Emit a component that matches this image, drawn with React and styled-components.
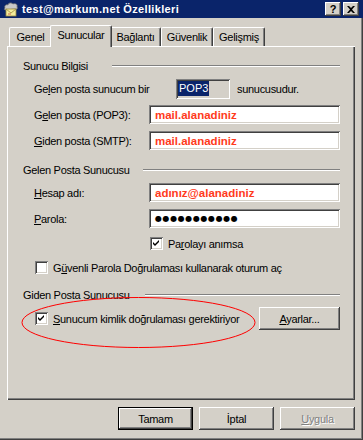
import React from 'react';
import styled, { createGlobalStyle, css } from 'styled-components';

const Global = createGlobalStyle`
  html, body { margin: 0; padding: 0; background: #d4d0c8; }
  body { font-family: "Liberation Sans", Arial, sans-serif; font-size: 11px; letter-spacing: -0.3px; color: #000; }
  * { box-sizing: border-box; }
`;

const raised = css`
  box-shadow: inset -1px -1px #404040, inset 1px 1px #fff, inset -2px -2px #808080, inset 2px 2px #d4d0c8;
`;
const sunken = css`
  box-shadow: inset 1px 1px #808080, inset -1px -1px #fff, inset 2px 2px #404040, inset -2px -2px #d4d0c8;
`;

const Window = styled.div`
  position: relative;
  width: 363px;
  height: 440px;
  background: #d4d0c8;
  display: flex;
  flex-direction: column;
  box-shadow: inset -1px -1px #404040, inset -2px -2px #808080;
  overflow: hidden;
`;

const TitleBar = styled.div`
  height: 18px;
  background: #0a246a;
  display: flex;
  align-items: center;
  padding: 0 4px 0 3px;
  color: #fff;
`;

const TitleText = styled.span`
  font-weight: bold;
  font-size: 11px;
  letter-spacing: 0.35px;
  margin-left: 3px;
  flex: 1;
`;

const TitleButton = styled.div`
  width: 16px;
  height: 14px;
  background: #d4d0c8;
  ${raised};
  color: #000;
  display: flex;
  align-items: center;
  justify-content: center;
  font-weight: bold;
  font-size: 11px;
  margin-left: ${(p) => p.$ml || 0}px;
  line-height: 1;
`;

const Body = styled.div`
  padding: 7px 8px 0 7px;
  display: flex;
  flex-direction: column;
`;

const TabRow = styled.div`
  height: 21px;
  display: flex;
  align-items: flex-end;
  padding-left: 2px;
  position: relative;
  z-index: 1;
`;

const Tab = styled.div`
  width: ${(p) => p.$w}px;
  height: ${(p) => (p.$active ? 22 : 19)}px;
  margin: ${(p) => (p.$active ? '0 -2px 0 -2px' : '0')};
  margin-bottom: ${(p) => (p.$active ? '-1px' : '0')};
  background: #d4d0c8;
  border-top: 1px solid #fff;
  border-left: 1px solid #fff;
  border-right: 1px solid #404040;
  border-radius: 2px 2px 0 0;
  box-shadow: inset -1px 0 #808080;
  display: flex;
  align-items: ${(p) => (p.$active ? 'flex-start' : 'center')};
  padding-top: ${(p) => (p.$active ? 3 : 0)}px;
  justify-content: center;
  position: relative;
  z-index: ${(p) => (p.$active ? 2 : 1)};
`;

const Panel = styled.div`
  width: 348px;
  height: 354px;
  box-shadow: inset 1px 1px #fff, inset -1px -1px #404040, inset -2px -2px #808080;
  padding: 13px 15px 0 16px;
  display: flex;
  flex-direction: column;
`;

const Section = styled.div`
  display: flex;
  flex-direction: column;
  gap: ${(p) => p.$gap ?? 7}px;
  margin-top: ${(p) => p.$mt || 0}px;
`;

const Header = styled.div`
  height: 13px;
  display: flex;
  align-items: center;
`;

const HeaderLabel = styled.span`
  width: ${(p) => p.$w}px;
  white-space: nowrap;
`;

const Etch = styled.div`
  flex: 1;
  height: 2px;
  border-top: 1px solid #808080;
  border-bottom: 1px solid #fff;
`;

const Row = styled.div`
  display: flex;
  align-items: center;
  height: ${(p) => p.$h || 19}px;
  padding-left: ${(p) => p.$pl ?? 11}px;
  margin-top: ${(p) => p.$mt || 0}px;
`;

const Label = styled.span`
  width: ${(p) => p.$w || 115}px;
  flex-shrink: 0;
  white-space: nowrap;
`;

const U = styled.span`
  text-decoration: underline;
`;

const Input = styled.div`
  flex: 1;
  height: 19px;
  background: #fff;
  ${sunken};
  display: flex;
  align-items: center;
  padding-left: 6px;
  color: #ff3a1c;
  font-weight: bold;
  font-size: 11.5px;
  letter-spacing: 0;
`;

const Dots = styled.span`
  color: #000;
  font-family: "DejaVu Sans", sans-serif;
  font-size: 8px;
  letter-spacing: 0.6px;
`;

const ReadOnlyBox = styled.div`
  width: 54px;
  height: 20px;
  background: #d4d0c8;
  ${sunken};
  display: flex;
  align-items: center;
  padding-left: 2px;
  margin-right: 7px;
`;

const Selected = styled.span`
  background: #0a246a;
  color: #fff;
  padding: 1px 1px;
  line-height: 13px;
  letter-spacing: 0;
`;

const CheckBox = styled.div`
  width: 13px;
  height: 13px;
  background: #fff;
  ${sunken};
  flex-shrink: 0;
  margin-right: 5px;
  display: flex;
  align-items: center;
  justify-content: center;
`;

const Button = styled.div`
  width: ${(p) => p.$w || 75}px;
  height: 23px;
  background: #d4d0c8;
  display: flex;
  align-items: center;
  justify-content: center;
  margin-left: ${(p) => (p.$auto ? 'auto' : '0')};
  ${(p) =>
    p.$default
      ? css`box-shadow: inset 0 0 0 1px #000, inset -2px -2px #404040, inset 2px 2px #fff, inset -3px -3px #808080;`
      : raised}
  color: ${(p) => (p.$disabled ? '#808080' : '#000')};
  text-shadow: ${(p) => (p.$disabled ? '1px 1px #fff' : 'none')};
`;

const ButtonRow = styled.div`
  display: flex;
  justify-content: flex-end;
  gap: 6px;
  margin-top: 7px;
`;

const Ellipse = styled.svg`
  position: absolute;
  left: 0;
  top: 0;
  pointer-events: none;
`;

const Check = () => (
  <svg width="7" height="7" viewBox="0 0 7 7">
    <path d="M0 2 L2 4 L6 0 L6 2 L2 6 L0 4 Z" fill="#000" />
  </svg>
);

const AppIcon = () => (
  <svg width="16" height="16" viewBox="0 0 16 16">
    <path d="M2 7 C1 5 3 3 5 4 C5 2 8 1 10 3 C12 2 15 3 14 6 C15 7 14 9 12 8 L3 9 C1 9 1 8 2 7 Z" fill="#c8c8c8" stroke="#707070" strokeWidth="0.8" />
    <rect x="3" y="8" width="10" height="7" fill="#f4ec9c" stroke="#9a8a40" strokeWidth="0.8" />
    <path d="M3 8 L8 12 L13 8" fill="none" stroke="#9a8a40" strokeWidth="0.8" />
    <path d="M5 13 H8" stroke="#c04040" strokeWidth="0.8" />
  </svg>
);

export default function App() {
  return (
    <>
      <Global />
      <Window>
        <TitleBar>
          <AppIcon />
          <TitleText>test@markum.net Özellikleri</TitleText>
          <TitleButton>?</TitleButton>
          <TitleButton $ml={2}>
            <svg width="8" height="7" viewBox="0 0 8 7">
              <path d="M0 0 L2 0 L4 2 L6 0 L8 0 L5 3.5 L8 7 L6 7 L4 5 L2 7 L0 7 L3 3.5 Z" fill="#000" />
            </svg>
          </TitleButton>
        </TitleBar>
        <Body>
          <TabRow>
            <Tab $w={43}>Genel</Tab>
            <Tab $w={62} $active>Sunucular</Tab>
            <Tab $w={51}>Bağlantı</Tab>
            <Tab $w={52}>Güvenlik</Tab>
            <Tab $w={52}>Gelişmiş</Tab>
          </TabRow>
          <Panel>
            <Section>
              <Header>
                <HeaderLabel $w={89}>Sunucu Bilgisi</HeaderLabel>
                <Etch />
              </Header>
              <Row>
                <Label $w={142}>
                  Ge<U>l</U>en posta sunucum bir
                </Label>
                <ReadOnlyBox>
                  <Selected>POP3</Selected>
                </ReadOnlyBox>
                <span>sunucusudur.</span>
              </Row>
              <Row>
                <Label>
                  G<U>e</U>len posta (POP3):
                </Label>
                <Input>mail.alanadiniz</Input>
              </Row>
              <Row>
                <Label>
                  <U>G</U>iden posta (SMTP):
                </Label>
                <Input>mail.alanadiniz</Input>
              </Row>
            </Section>
            <Section $mt={13}>
              <Header>
                <HeaderLabel $w={120}>Gelen Posta Sunucusu</HeaderLabel>
                <Etch />
              </Header>
              <Row>
                <Label>
                  <U>H</U>esap adı:
                </Label>
                <Input>adınız@alanadiniz</Input>
              </Row>
              <Row>
                <Label>
                  <U>P</U>arola:
                </Label>
                <Input>
                  <Dots>●●●●●●●●●●●</Dots>
                </Input>
              </Row>
              <Row $h={13} $pl={127} $mt={2}>
                <CheckBox>
                  <Check />
                </CheckBox>
                <span>
                  Pa<U>r</U>olayı anımsa
                </span>
              </Row>
              <Row $h={13} $pl={12} $mt={4}>
                <CheckBox />
                <span>
                  G<U>ü</U>venli Parola Doğrulaması kullanarak oturum aç
                </span>
              </Row>
            </Section>
            <Section $mt={14} $gap={6}>
              <Header>
                <HeaderLabel $w={122}>Giden Posta Sunucusu</HeaderLabel>
                <Etch />
              </Header>
              <Row $h={23} $pl={12}>
                <CheckBox>
                  <Check />
                </CheckBox>
                <span>
                  <U>S</U>unucum kimlik doğrulaması gerektiriyor
                </span>
                <Button $w={81} $auto>
                  <span>
                    <U>A</U>yarlar...
                  </span>
                </Button>
              </Row>
            </Section>
          </Panel>
          <ButtonRow>
            <Button $default>Tamam</Button>
            <Button>İptal</Button>
            <Button $disabled>
              <span>
                <U>U</U>ygula
              </span>
            </Button>
          </ButtonRow>
        </Body>
        <Ellipse width="363" height="440" viewBox="0 0 363 440">
          <ellipse cx="138.5" cy="322.5" rx="116.5" ry="25" fill="none" stroke="#ff0000" strokeWidth="1" />
        </Ellipse>
      </Window>
    </>
  );
}
